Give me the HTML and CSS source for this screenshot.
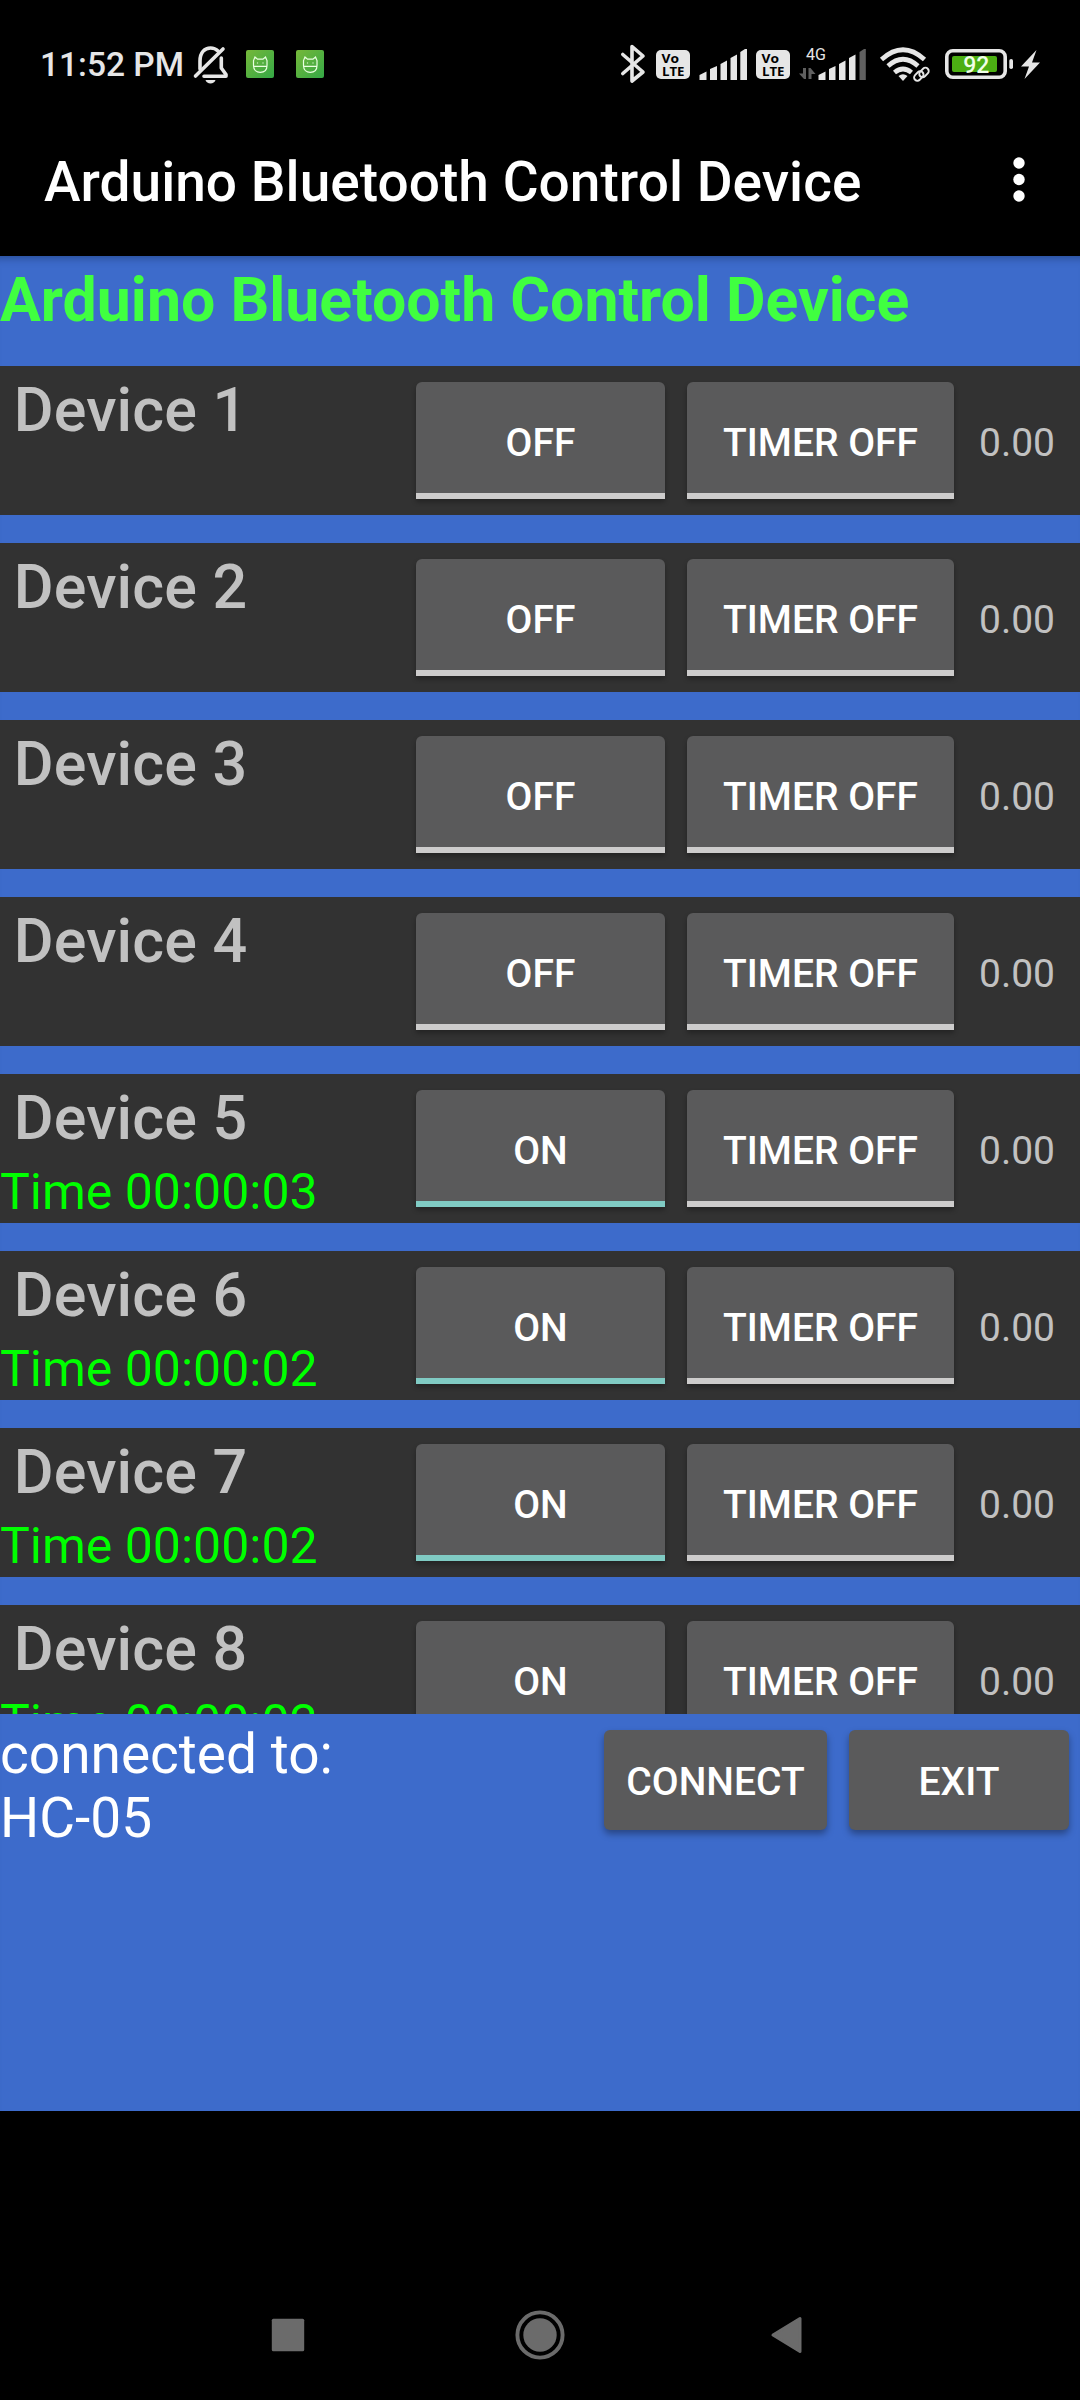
FILE: index.html
```html
<!DOCTYPE html>
<html lang="en">
<head>
<meta charset="utf-8">
<title>Arduino Bluetooth Control Device</title>
<link rel="stylesheet" href="styles.css">
</head>
<body>
<div class="screen">
  <header class="status">
    <span class="clock">11:52 PM</span>
    <svg class="bell" width="38" height="40" viewBox="192 44 38 40" fill="none" stroke="#e6e6e6" stroke-width="3.6" stroke-linecap="round" stroke-linejoin="round">
      <path d="M200 69V61C200 52 205 48 210.500 48C213.500 48 216 49 218 51M221.300 58V68L226 74.500V76.300H204"/>
      <path d="M195.500 76L223 49"/>
      <path d="M205.500 80H215.500C214.500 84.500 206.500 84.500 205.500 80Z" fill="#e6e6e6" stroke="none"/>
    </svg>
    <svg class="app-icon" width="28" height="28" viewBox="0 0 28 28">
      <defs><linearGradient id="leaf" x1="0" y1="0" x2="1" y2="1"><stop offset="0" stop-color="#76b83a"/><stop offset="1" stop-color="#34a846"/></linearGradient></defs>
      <rect width="28" height="28" rx="2" fill="url(#leaf)"/>
      <path d="M7.500 15.500V10.500L9 7L11.500 9.200H17L19.500 7L21 10.500V15.500C21 20 18 22.300 14.200 22.300C10.500 22.300 7.500 20 7.500 15.500ZM7.500 16.300H21M11.500 12.500V13.500M17 12.500V13.500" fill="none" stroke="#e9ffe0" stroke-width="1.200"/>
    </svg>
    <svg class="app-icon" width="28" height="28" viewBox="0 0 28 28">
      <rect width="28" height="28" rx="2" fill="url(#leaf)"/>
      <path d="M7.500 15.500V10.500L9 7L11.500 9.200H17L19.500 7L21 10.500V15.500C21 20 18 22.300 14.200 22.300C10.500 22.300 7.500 20 7.500 15.500ZM7.500 16.300H21M11.500 12.500V13.500M17 12.500V13.500" fill="none" stroke="#e9ffe0" stroke-width="1.200"/>
    </svg>
    <svg class="system" width="424" height="40" viewBox="620 44 424 40" fill="#e6e6e6">
      <path d="M622.800 54.500L643 72L632 81V46.500L643 56L622.800 73.500" fill="none" stroke="#e6e6e6" stroke-width="3.600" stroke-linecap="round" stroke-linejoin="round"/>
      <g id="volte">
        <rect x="656" y="50" width="34" height="29" rx="5"/>
        <text class="volte-text" x="661.500" y="63" textLength="17.500" lengthAdjust="spacingAndGlyphs">Vo</text>
        <text class="volte-text" x="662" y="76" textLength="22.500" lengthAdjust="spacingAndGlyphs">LTE</text>
      </g>
      <path d="M699.500 75L706.500 71.500V80H699.500ZM710 69L717 66V80H710ZM720.500 64L727 60.500V80H720.500ZM730.500 58L737 54.500V80H730.500ZM740.300 52L745 49H747V80H740.300Z"/>
      <use href="#volte" x="100"/>
      <text class="net" x="806" y="59.500" textLength="20" lengthAdjust="spacingAndGlyphs">4G</text>
      <path fill="#606060" d="M803 68H806V79H804L799 73.500H803ZM808.500 79V68H810.500L815.500 74H811.500V79Z"/>
      <path d="M818.500 75L825.500 71.500V80H818.500ZM829 69L835.500 66V80H829ZM839 64L845.500 60.500V80H839ZM849 58L855.500 54.500V80H849Z"/>
      <path fill="#606060" d="M859.500 52L864 49H865.800V80H859.500Z"/>
      <g fill="none" stroke="#e6e6e6" stroke-width="4.700">
        <path d="M881.500 59.500Q903 40 924.500 59.500M888 66Q903 52.500 918 66M894.500 72.500Q903 65.500 911.500 72.500"/>
      </g>
      <path d="M898.500 76Q903 72.500 907.500 76L903 81Z"/>
      <g fill="none" stroke="#e6e6e6" stroke-width="1.900">
        <rect x="-5.300" y="-3.300" width="10.600" height="6.600" rx="3.300" transform="translate(918.800 76) rotate(-45)"/>
        <rect x="-5.300" y="-3.300" width="10.600" height="6.600" rx="3.300" transform="translate(924 72.500) rotate(-45)"/>
      </g>
      <rect x="946.800" y="50.800" width="58.400" height="26.400" rx="6" fill="none" stroke="#e6e6e6" stroke-width="3.600"/>
      <rect x="952" y="56" width="45" height="16" rx="2" fill="#4caf13"/>
      <rect x="1009.300" y="59" width="3.700" height="10" rx="1.800"/>
      <text class="charge" x="976.300" y="72.700" text-anchor="middle">92</text>
      <path d="M1036.500 50L1021 66.500H1029L1024.500 79L1040 62.500H1032Z"/>
    </svg>
  </header>

  <div class="appbar">
    <h1 class="app-title">Arduino Bluetooth Control Device</h1>
    <svg width="12" height="46" viewBox="0 0 12 46" fill="#fff"><circle cx="6" cy="6" r="5.700"/><circle cx="6" cy="22.500" r="5.700"/><circle cx="6" cy="39" r="5.700"/></svg>
  </div>

  <main class="content">
    <h2 class="heading">Arduino Bluetooth Control Device</h2>
    <div class="list">
      <section class="row"><div class="info"><div class="name">Device 1</div></div><button class="toggle">OFF</button><button class="toggle timer">TIMER OFF</button><span class="value">0.00</span></section>
      <section class="row"><div class="info"><div class="name">Device 2</div></div><button class="toggle">OFF</button><button class="toggle timer">TIMER OFF</button><span class="value">0.00</span></section>
      <section class="row"><div class="info"><div class="name">Device 3</div></div><button class="toggle">OFF</button><button class="toggle timer">TIMER OFF</button><span class="value">0.00</span></section>
      <section class="row"><div class="info"><div class="name">Device 4</div></div><button class="toggle">OFF</button><button class="toggle timer">TIMER OFF</button><span class="value">0.00</span></section>
      <section class="row"><div class="info"><div class="name">Device 5</div><div class="time">Time 00:00:03</div></div><button class="toggle on">ON</button><button class="toggle timer">TIMER OFF</button><span class="value">0.00</span></section>
      <section class="row"><div class="info"><div class="name">Device 6</div><div class="time">Time 00:00:02</div></div><button class="toggle on">ON</button><button class="toggle timer">TIMER OFF</button><span class="value">0.00</span></section>
      <section class="row"><div class="info"><div class="name">Device 7</div><div class="time">Time 00:00:02</div></div><button class="toggle on">ON</button><button class="toggle timer">TIMER OFF</button><span class="value">0.00</span></section>
      <section class="row"><div class="info"><div class="name">Device 8</div><div class="time">Time 00:00:02</div></div><button class="toggle on">ON</button><button class="toggle timer">TIMER OFF</button><span class="value">0.00</span></section>
    </div>
    <div class="footer">
      <p class="connection">connected to:<br>HC-05</p>
      <button class="action connect">CONNECT</button>
      <button class="action">EXIT</button>
    </div>
  </main>

  <nav class="navbar">
    <svg width="34" height="50" viewBox="0 0 34 50" fill="#6b6b6b"><rect x=".8" y="8.700" width="32.400" height="32.600" rx="1.500"/></svg>
    <svg width="50" height="50" viewBox="0 0 50 50"><circle cx="25" cy="25" r="22.600" fill="none" stroke="#6b6b6b" stroke-width="3.900"/><circle cx="25" cy="25" r="16.700" fill="#6b6b6b"/></svg>
    <svg width="42" height="50" viewBox="0 0 42 50"><path d="M6 25L33 8.500V41.500Z" fill="#6b6b6b" stroke="#6b6b6b" stroke-width="3" stroke-linejoin="round"/></svg>
  </nav>
</div>
</body>
</html>
```
FILE: styles.css
```css
* { box-sizing: border-box; }
body { margin: 0; background: #000; font-family: Roboto, sans-serif; }
h1, h2, p { margin: 0; }
svg { display: block; flex: none; }
button { border: 0; padding: 0; font: 500 39px/45px Roboto, sans-serif; color: #fff; background: #5a5a5b; }

.screen { width: 1080px; height: 2400px; overflow: hidden; display: flex; flex-direction: column; background: #000; }

.status { height: 104px; flex: none; display: flex; align-items: center; padding: 24px 36px 0 40px; }
.clock { width: 152px; padding-top: 2px; font-size: 33.5px; line-height: 40px; font-weight: 500; color: #e6e6e6; white-space: nowrap; }
.bell { margin-right: 16px; }
.app-icon { margin-right: 22px; }
.system { margin-left: auto; }
.volte-text { font: 700 13px "Open Sans", sans-serif; fill: #000; }
.net { font: 400 17px Roboto, sans-serif; }
.charge { font: 500 23px Roboto, sans-serif; fill: #f0ffe8; }

.appbar { height: 152px; flex: none; display: flex; align-items: center; justify-content: space-between; padding: 0 55px 0 44px; }
.app-title { font-size: 55px; line-height: 64px; font-weight: 500; letter-spacing: .04px; color: #fff; white-space: nowrap; padding-top: 3px; }

.content { height: 1855px; flex: none; background: #3d6bcb; box-shadow: inset 0 10px 9px -8px #274b93; }
.heading { height: 110px; padding-top: 9px; font-size: 60.8px; line-height: 72px; font-weight: 700; color: #40ff40; white-space: nowrap; }

.list { height: 1348px; overflow: hidden; display: flex; flex-direction: column; gap: 28px; }
.row { height: 149px; flex: none; display: flex; align-items: flex-start; padding-top: 16px; background: #323232; }
.info { width: 416px; margin-top: -16px; white-space: nowrap; }
.name { height: 81px; padding: 8px 0 0 13.75px; font-size: 61px; line-height: 72px; font-weight: 500; letter-spacing: .15px; color: #c1c1c1; }
.time { font-size: 50px; line-height: 58px; padding-top: 8px; color: #0f0; }
.toggle { width: 249px; height: 117px; padding-top: 12px; margin-right: 22px; border-bottom: 6px solid #cdcccc; border-radius: 6px 6px 0 0; box-shadow: 0 3px 5px rgba(0, 0, 0, .3); }
.toggle.on { border-bottom-color: #80cbc4; }
.toggle.timer { width: 267px; margin-right: 25px; }
.value { font-size: 39px; line-height: 45px; padding-top: 39px; color: #c1c1c1; }

.footer { display: flex; align-items: flex-start; padding: 16px 11px 0 0; gap: 22px; }
.connection { flex: 1; margin-top: -8px; font-size: 55px; line-height: 64px; color: #fff; }
.action { width: 220px; height: 100px; padding-top: 4px; border-radius: 6px; box-shadow: 0 4px 7px rgba(0, 0, 0, .35); }
.connect { width: 223px; }

.navbar { flex: 1; display: flex; align-items: flex-end; justify-content: space-between; padding: 0 271px 40px; }
.navbar svg:last-child { margin-left: -8px; }
```
